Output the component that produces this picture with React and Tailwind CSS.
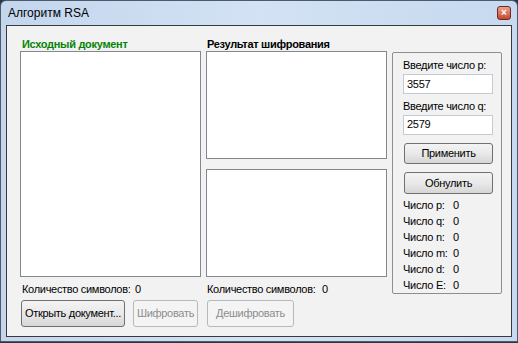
import React from "react";

const font = { fontFamily: '"Liberation Sans", Arial, sans-serif' };

function Btn({ children, disabled, className = "" }) {
  return (
    <div
      className={
        "flex items-center justify-center whitespace-nowrap rounded-[3px] border text-[11px] tracking-[-0.3px] " +
        (disabled
          ? "border-[#b5b9bc] bg-[#f4f4f4] text-[#8d8d8d] "
          : "border-[#707070] bg-gradient-to-b from-[#f3f3f3] via-[#e9e9e9] to-[#d6d6d6] text-black ") +
        className
      }
    >
      {children}
    </div>
  );
}

function Box({ className = "" }) {
  return <div className={"border border-[#828790] bg-white " + className} />;
}

export default function App() {
  return (
    <div
      className="relative h-[343px] w-[518px] overflow-hidden bg-[#2b3440]"
      style={font}
    >
      <div className="absolute left-0 top-0 h-[342px] w-[518px] rounded-t-[6px] border border-[#4d5a6a] bg-gradient-to-r from-[#c3d6ee] via-[#d3e2f4] to-[#c6d9ef]">
        {/* title bar */}
        <div className="flex h-[24px] items-center justify-between pl-[7px] pr-[6px]">
          <span className="text-[12px] text-black">Алгоритм RSA</span>
          <div className="flex h-[14px] w-[14px] items-center justify-center rounded-[3px] border border-[#6d2a20] bg-gradient-to-b from-[#e9a391] to-[#c7432a] text-[10px] font-bold leading-none text-white">
            ×
          </div>
        </div>
        {/* client */}
        <div className="ml-[5px] flex h-[312px] w-[506px] whitespace-nowrap border border-[#3a3a3a] bg-[#f2f2f3] pl-[13px] pt-[11px] text-[11px] tracking-[-0.3px]">
          {/* column 1 */}
          <div className="flex w-[181px] flex-col">
            <div className="h-[14px] pl-[2px] font-bold leading-[14px] text-[#078407]">
              Исходный документ
            </div>
            <Box className="h-[226px]" />
            <div className="flex h-[23px] items-center pl-[2px] pt-[1px] text-black">
              <span className="w-[113px]">Количество символов:</span>
              <span>0</span>
            </div>
            <div className="flex gap-[8px] pl-[1px]">
              <Btn className="h-[27px] w-[104px]">Открыть документ...</Btn>
              <Btn disabled className="h-[27px] w-[65px]">Шифровать</Btn>
            </div>
          </div>
          {/* column 2 */}
          <div className="ml-[5px] flex w-[181px] flex-col">
            <div className="h-[14px] pl-[1px] font-bold leading-[14px] text-black">
              Результат шифрования
            </div>
            <Box className="h-[108px]" />
            <Box className="mt-[10px] h-[108px]" />
            <div className="flex h-[23px] items-center pl-[1px] pt-[1px] text-black">
              <span className="w-[115px]">Количество символов:</span>
              <span>0</span>
            </div>
            <div className="flex pl-[1px]">
              <Btn disabled className="h-[27px] w-[87px]">Дешифровать</Btn>
            </div>
          </div>
          {/* column 3 group */}
          <div className="ml-[5px] mt-[15px] flex h-[242px] w-[110px] flex-col rounded-[2px] border border-[#8e8f8f] pl-[10px] pr-[8px] text-black">
            <div className="mt-[5px] h-[14px] leading-[14px]">Введите число p:</div>
            <div className="mt-[2px] flex h-[20px] items-center border border-[#c5cbd3] bg-white pl-[3px]">
              3557
            </div>
            <div className="mt-[5px] h-[14px] leading-[14px]">Введите число q:</div>
            <div className="mt-[2px] flex h-[20px] items-center border border-[#c5cbd3] bg-white pl-[3px]">
              2579
            </div>
            <Btn className="ml-[1px] mt-[8px] h-[22px] w-[89px]">Применить</Btn>
            <Btn className="ml-[1px] mt-[8px] h-[22px] w-[89px]">Обнулить</Btn>
            <div className="mt-[3px] flex flex-col">
              {["p", "q", "n", "m", "d", "E"].map((k) => (
                <div key={k} className="flex h-[16px] items-center">
                  <span className="w-[50px]">Число {k}:</span>
                  <span>0</span>
                </div>
              ))}
            </div>
          </div>
        </div>
      </div>
    </div>
  );
}
